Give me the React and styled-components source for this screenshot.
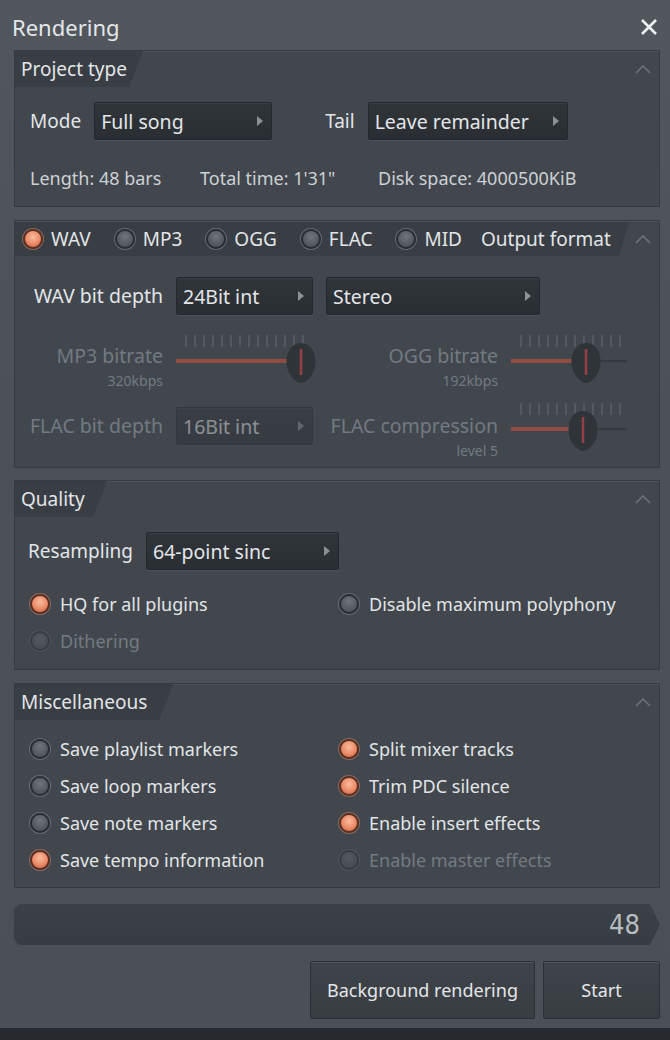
import styled, { createGlobalStyle } from "styled-components";

const GlobalStyle = createGlobalStyle`
  html, body { margin: 0; padding: 0; background: #4b5157; }
  body { font-family: "Noto Sans", "Open Sans", sans-serif; }
`;

const Window = styled.div`
  width: 670px;
  height: 1040px;
  box-sizing: border-box;
  background: linear-gradient(#51575d, #4b5157 40%, #4a5056);
  border-bottom: 12px solid #26292d;
  display: flex;
  flex-direction: column;
  color: #dfe2e5;
  font-size: 18px;
`;

const TitleBar = styled.div`
  height: 50px;
  display: flex;
  align-items: center;
  justify-content: space-between;
  padding: 4px 12px 0 12px;
  box-sizing: border-box;
`;

const Title = styled.div`
  font-size: 22px;
  color: #e4e7ea;
`;

const Section = styled.div`
  margin: ${(p) => p.$top || 0}px 10px 0 14px;
  height: ${(p) => p.$h}px;
  box-sizing: border-box;
  background: #41474d;
  border: 1px solid #363b40;
  box-shadow: inset 0 1px 0 #4c5258;
  display: flex;
  flex-direction: column;
`;

const HeadRow = styled.div`
  height: 36px;
  display: flex;
  align-items: center;
  justify-content: space-between;
`;

const Tab = styled.div`
  height: 36px;
  width: ${(p) => p.$w}px;
  background: #393e44;
  clip-path: polygon(0 0, 100% 0, calc(100% - 14px) 100%, 0 100%);
  display: flex;
  align-items: center;
  padding-left: 6px;
  box-sizing: border-box;
  font-size: 19px;
  color: #e2e5e8;
`;

const FormatBar = styled.div`
  height: 34px;
  flex: 1;
  margin-right: 6px;
  background: #393e44;
  clip-path: polygon(0 0, 100% 0, calc(100% - 10px) 100%, 0 100%);
  display: flex;
  align-items: center;
  padding-left: 8px;
  gap: 24px;
  & > * { flex-shrink: 0; }
`;

const FormatTitle = styled.span`
  margin-left: -5px;
  font-size: 19px;
  color: #e2e5e8;
  white-space: nowrap;
`;

const Chevron = styled.svg`
  width: 16px;
  height: 10px;
  margin-right: 8px;
  flex-shrink: 0;
`;

const Row = styled.div`
  display: flex;
  align-items: center;
  gap: ${(p) => p.$gap ?? 8}px;
  padding-left: ${(p) => p.$pl || 0}px;
  margin-top: ${(p) => p.$mt || 0}px;
`;

const Label = styled.span`
  font-size: ${(p) => p.$size || 19}px;
  color: ${(p) => (p.$off ? "#737a81" : "#e2e5e8")};
  white-space: nowrap;
  margin-left: ${(p) => p.$ml || 0}px;
`;

const InfoText = styled.span`
  font-size: 18px;
  color: #cdd1d5;
  width: ${(p) => p.$w}px;
  white-space: nowrap;
`;

const Drop = styled.div`
  width: ${(p) => p.$w}px;
  height: 38px;
  box-sizing: border-box;
  background: linear-gradient(#30353a, #2a2e33);
  border: 1px solid #24272b;
  box-shadow: inset 0 1px 0 #3b4046, 0 1px 0 #4d5359;
  border-radius: 2px;
  display: flex;
  align-items: center;
  justify-content: space-between;
  padding: 0 8px 0 6px;
  font-size: 19.5px;
  color: #e3e6e9;
  opacity: ${(p) => (p.$off ? 0.45 : 1)};
`;

const Arrow = styled.span`
  width: 0;
  height: 0;
  border-top: 5px solid transparent;
  border-bottom: 5px solid transparent;
  border-left: 6px solid #8b9197;
`;

const Grid = styled.div`
  display: grid;
  grid-template-columns: 138px 137px 172px 120px;
  column-gap: 13px;
  padding-left: 10px;
  margin-top: ${(p) => p.$mt}px;
  align-items: start;
`;

const RightLabel = styled.div`
  display: flex;
  flex-direction: column;
  align-items: flex-end;
  padding-top: ${(p) => p.$pt || 0}px;
  font-size: 19.5px;
  color: ${(p) => (p.$off ? "#737a81" : "#e2e5e8")};
  white-space: nowrap;
  line-height: 26px;
`;

const Sub = styled.span`
  font-size: 14px;
  line-height: 24px;
  color: #737a81;
`;

const SpanCell = styled.div`
  grid-column: 3 / span 2;
`;

const RadioDot = styled.span`
  width: 16px;
  height: 16px;
  border-radius: 50%;
  flex-shrink: 0;
  border: 2px solid ${(p) => (p.$on ? "#5a3022" : "#2a2e32")};
  box-shadow: 0 0 0 1px ${(p) => (p.$on ? "#8a6a5e" : "#666c72")};
  background: ${(p) =>
    p.$on
      ? "radial-gradient(circle at 50% 38%, #f8bd9f, #ec8a68 55%, #c25a3b)"
      : "radial-gradient(circle at 50% 35%, #6f757a, #50565b 70%, #454a4f)"};
  opacity: ${(p) => (p.$off ? 0.4 : 1)};
`;

const RadioItem = styled.div`
  display: flex;
  align-items: center;
  gap: ${(p) => p.$gap || 10}px;
  height: ${(p) => p.$h || 37}px;
`;

const OptGrid = styled.div`
  display: grid;
  grid-template-columns: 309px 1fr;
  padding-left: 15px;
  margin-top: ${(p) => p.$mt}px;
`;

const KnobWrap = styled.svg`
  width: ${(p) => p.$w}px;
  height: 56px;
  opacity: 0.5;
  display: block;
  margin-top: ${(p) => p.$mt || 0}px;
`;

const Progress = styled.div`
  margin: 16px 10px 0 14px;
  height: 41px;
  background: linear-gradient(#3c4147, #373c42);
  clip-path: polygon(0 0, calc(100% - 10px) 0, 100% 50%, calc(100% - 10px) 100%, 0 100%);
  border-radius: 8px 0 0 8px;
  display: flex;
  align-items: center;
  justify-content: flex-end;
  padding-right: 20px;
  font-family: "DejaVu Sans Condensed", "Liberation Sans", sans-serif;
  font-size: 27px;
  color: #b9bec3;
`;

const Buttons = styled.div`
  display: flex;
  justify-content: flex-end;
  gap: 8px;
  margin: 16px 10px 0 0;
`;

const Button = styled.div`
  width: ${(p) => p.$w}px;
  height: 58px;
  box-sizing: border-box;
  background: linear-gradient(#3f444a, #383d42);
  border: 1px solid #2c3034;
  box-shadow: inset 0 1px 0 #4e545a;
  border-radius: 2px;
  display: flex;
  align-items: center;
  justify-content: center;
  font-size: 18px;
  color: #e3e6e9;
`;

function Up() {
  return (
    <Chevron viewBox="0 0 16 10">
      <path d="M1 9 L8 2 L15 9" fill="none" stroke="#6b7177" strokeWidth="1.6" />
    </Chevron>
  );
}

function Radio({ on, off, children, h, gap, size = 18 }) {
  return (
    <RadioItem $h={h} $gap={gap}>
      <RadioDot $on={on} $off={off} />
      <Label $off={off} $size={size}>
        {children}
      </Label>
    </RadioItem>
  );
}

function Knob({ w, pos, mt }) {
  const ticks = [];
  for (let x = 10; x < w - 8; x += 9) ticks.push(x);
  const y = 30;
  return (
    <KnobWrap $w={w} $mt={mt} viewBox={`0 0 ${w} 56`}>
      {ticks.map((x) => (
        <line key={x} x1={x} y1={y - 26} x2={x} y2={y - 14} stroke="#8a9096" strokeWidth="1" />
      ))}
      <line x1="0" y1={y} x2={w - 4} y2={y} stroke="#2a2e32" strokeWidth="2" />
      <line x1="0" y1={y} x2={pos - 12} y2={y} stroke="#e0523a" strokeWidth="4" />
      <path
        d={`M${pos} ${y - 18} C${pos + 12} ${y - 18} ${pos + 16} ${y - 4} ${pos + 14} ${y + 6} C${pos + 12} ${y + 16} ${pos + 4} ${y + 22} ${pos} ${y + 22} C${pos - 4} ${y + 22} ${pos - 12} ${y + 16} ${pos - 14} ${y + 6} C${pos - 16} ${y - 4} ${pos - 12} ${y - 18} ${pos} ${y - 18} Z`}
        fill="#1f2226"
      />
      <line x1={pos} y1={y - 12} x2={pos} y2={y + 14} stroke="#e03a3a" strokeWidth="2.5" />
    </KnobWrap>
  );
}

export default function App() {
  return (
    <Window>
      <GlobalStyle />
      <TitleBar>
        <Title>Rendering</Title>
        <svg width="18" height="18" viewBox="0 0 18 18">
          <path d="M2 2 L16 16 M16 2 L2 16" stroke="#eef0f2" strokeWidth="2.6" />
        </svg>
      </TitleBar>

      <Section $h={157}>
        <HeadRow>
          <Tab $w={128}>Project type</Tab>
          <Up />
        </HeadRow>
        <Row $pl={15} $mt={15} $gap={13}>
          <Label>Mode</Label>
          <Drop $w={178}>
            Full song
            <Arrow />
          </Drop>
          <Label $ml={40}>Tail</Label>
          <Drop $w={200}>
            Leave remainder
            <Arrow />
          </Drop>
        </Row>
        <Row $pl={15} $mt={26} $gap={0}>
          <InfoText $w={170}>Length: 48 bars</InfoText>
          <InfoText $w={178}>Total time: 1'31"</InfoText>
          <InfoText>Disk space: 4000500KiB</InfoText>
        </Row>
      </Section>

      <Section $top={13} $h={248}>
        <HeadRow>
          <FormatBar>
            <Radio on h={34} gap={8} size={19}>WAV</Radio>
            <Radio h={34} gap={8} size={19}>MP3</Radio>
            <Radio h={34} gap={8} size={19}>OGG</Radio>
            <Radio h={34} gap={8} size={19}>FLAC</Radio>
            <Radio h={34} gap={8} size={19}>MID</Radio>
            <FormatTitle>Output format</FormatTitle>
          </FormatBar>
          <Up />
        </HeadRow>
        <Grid $mt={20}>
          <RightLabel $pt={6}>WAV bit depth</RightLabel>
          <Drop $w={137}>
            24Bit int
            <Arrow />
          </Drop>
          <SpanCell>
            <Drop $w={214}>
              Stereo
              <Arrow />
            </Drop>
          </SpanCell>
        </Grid>
        <Grid $mt={16}>
          <RightLabel $off $pt={12}>
            MP3 bitrate
            <Sub>320kbps</Sub>
          </RightLabel>
          <Knob w={140} pos={125} />
          <RightLabel $off $pt={12}>
            OGG bitrate
            <Sub>192kbps</Sub>
          </RightLabel>
          <Knob w={120} pos={75} />
        </Grid>
        <Grid $mt={14}>
          <RightLabel $off $pt={6}>FLAC bit depth</RightLabel>
          <Drop $w={137} $off>
            16Bit int
            <Arrow />
          </Drop>
          <RightLabel $off $pt={6}>
            FLAC compression
            <Sub>level 5</Sub>
          </RightLabel>
          <Knob w={120} pos={72} mt={-8} />
        </Grid>
      </Section>

      <Section $top={12} $h={190}>
        <HeadRow>
          <Tab $w={92}>Quality</Tab>
          <Up />
        </HeadRow>
        <Row $pl={13} $mt={15} $gap={13}>
          <Label>Resampling</Label>
          <Drop $w={193}>
            64-point sinc
            <Arrow />
          </Drop>
        </Row>
        <OptGrid $mt={15}>
          <Radio on>HQ for all plugins</Radio>
          <Radio>Disable maximum polyphony</Radio>
          <Radio off>Dithering</Radio>
        </OptGrid>
      </Section>

      <Section $top={13} $h={205}>
        <HeadRow>
          <Tab $w={158}>Miscellaneous</Tab>
          <Up />
        </HeadRow>
        <OptGrid $mt={10}>
          <Radio>Save playlist markers</Radio>
          <Radio on>Split mixer tracks</Radio>
          <Radio>Save loop markers</Radio>
          <Radio on>Trim PDC silence</Radio>
          <Radio>Save note markers</Radio>
          <Radio on>Enable insert effects</Radio>
          <Radio on>Save tempo information</Radio>
          <Radio off>Enable master effects</Radio>
        </OptGrid>
      </Section>

      <Progress>48</Progress>

      <Buttons>
        <Button $w={225}>Background rendering</Button>
        <Button $w={117}>Start</Button>
      </Buttons>
    </Window>
  );
}
